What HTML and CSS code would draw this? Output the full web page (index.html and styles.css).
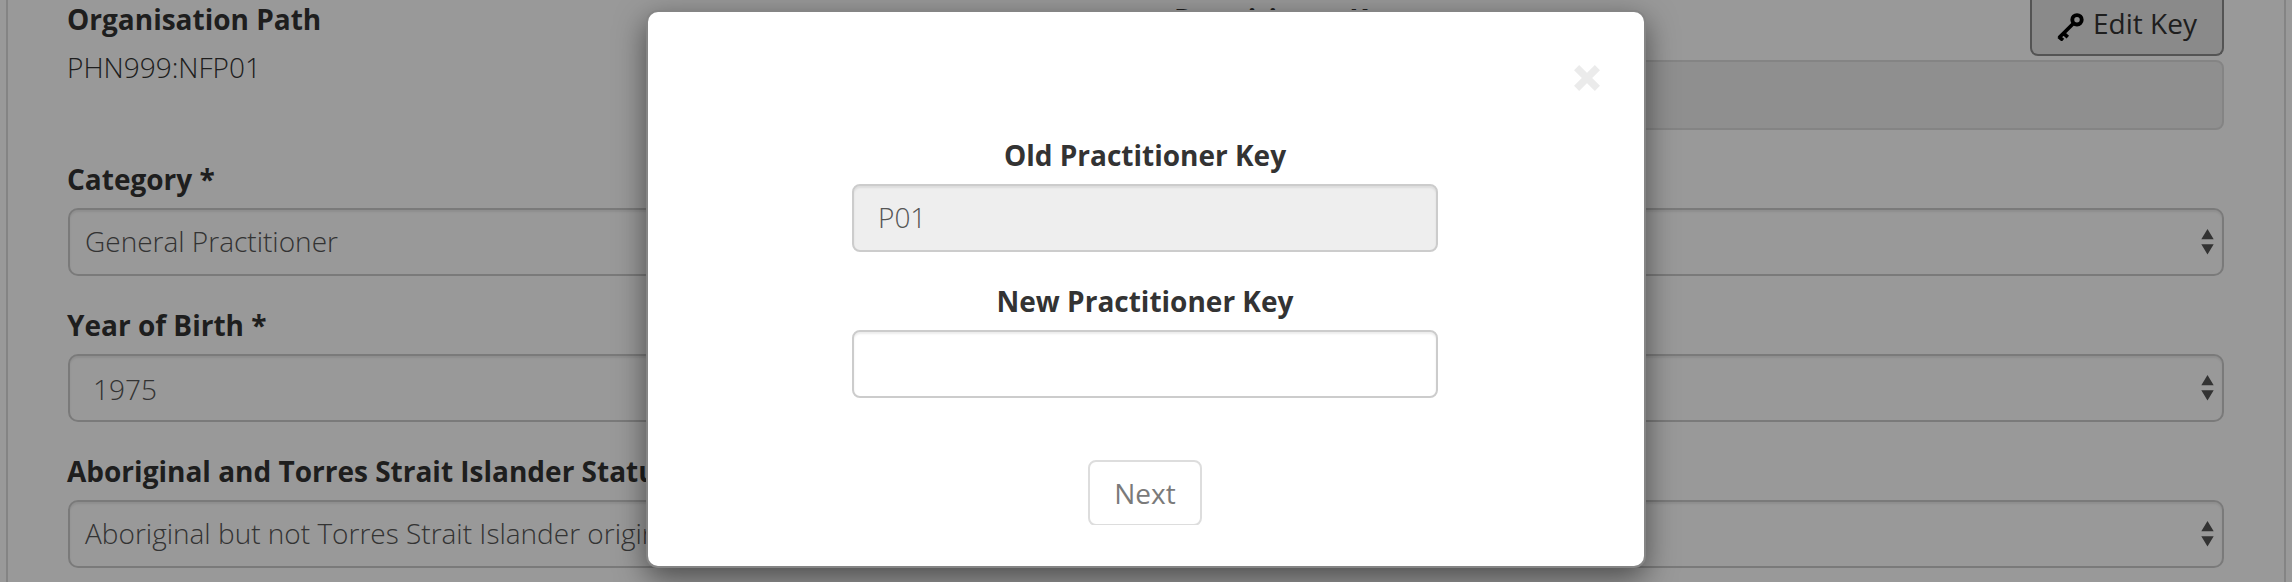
FILE: index.html
```html
<!DOCTYPE html>
<html lang="en">
<head>
<meta charset="utf-8">
<title>Edit Practitioner Key</title>
<link rel="stylesheet" href="styles.css">
</head>
<body>
<main class="panel">
  <div class="row row-first">
    <div class="field">
      <div class="label">Organisation Path</div>
      <div class="static">PHN999:NFP01</div>
    </div>
    <div class="field">
      <div class="label-bar">
        <div class="label label-right">Practitioner Key</div>
        <button class="edit-key" type="button">
          <svg class="key-icon" viewBox="0 0 27 28" width="27" height="28">
            <circle cx="20" cy="6.8" r="4.7" fill="none" stroke="#000" stroke-width="3.9"/>
            <path d="M16.6 10.2L2 24.8M1.6 23.6L6 27.2M6.6 20.4L10.8 24.2" fill="none" stroke="#000" stroke-width="3.7"/>
          </svg>
          <span>Edit Key</span>
        </button>
      </div>
      <div class="control disabled"></div>
    </div>
  </div>
  <div class="row">
    <div class="field">
      <div class="label">Category *</div>
      <div class="control select">General Practitioner</div>
    </div>
    <div class="field">
      <div class="label"></div>
      <div class="control select"><svg class="arrows" viewBox="0 0 13 26" width="13" height="26"><path d="M6.5 0L12.7 10.2H.3zM6.5 25.4L.3 15.2H12.7z"/></svg></div>
    </div>
  </div>
  <div class="row">
    <div class="field">
      <div class="label">Year of Birth *</div>
      <div class="control select year">1975</div>
    </div>
    <div class="field">
      <div class="label"></div>
      <div class="control select"><svg class="arrows" viewBox="0 0 13 26" width="13" height="26"><path d="M6.5 0L12.7 10.2H.3zM6.5 25.4L.3 15.2H12.7z"/></svg></div>
    </div>
  </div>
  <div class="row">
    <div class="field">
      <div class="label">Aboriginal and Torres Strait Islander Status *</div>
      <div class="control select">Aboriginal but not Torres Strait Islander origin</div>
    </div>
    <div class="field">
      <div class="label"></div>
      <div class="control select"><svg class="arrows" viewBox="0 0 13 26" width="13" height="26"><path d="M6.5 0L12.7 10.2H.3zM6.5 25.4L.3 15.2H12.7z"/></svg></div>
    </div>
  </div>
</main>
<div class="backdrop">
  <div class="modal">
    <div class="modal-head">
      <svg class="close" viewBox="0 0 26 26" width="26" height="26"><path d="M2.6 2.6L23.4 23.4M23.4 2.6L2.6 23.4"/></svg>
    </div>
    <div class="modal-body">
      <div class="modal-label">Old Practitioner Key</div>
      <div class="control modal-input locked">P01</div>
      <div class="modal-label">New Practitioner Key</div>
      <div class="control modal-input"></div>
      <div class="actions"><button class="next" type="button">Next</button></div>
    </div>
  </div>
</div>
</body>
</html>
```
FILE: styles.css
```css
* { box-sizing: border-box; }
html, body { margin: 0; height: 582px; overflow: hidden; }
body {
  background: #fff;
  color: #333;
  font: 300 28px/40px "Open Sans", sans-serif;
}
.panel {
  width: 2280px;
  height: 582px;
  margin-left: 6px;
  padding: 0 60px;
  border: solid #ddd;
  border-width: 0 2px;
}
.row {
  display: grid;
  grid-template-columns: 1fr 1fr;
  column-gap: 56px;
  height: 146px;
}
.row-first { height: 160px; }
.label {
  height: 48px;
  margin-left: -1px;
  line-height: 38px;
  font-weight: 700;
  white-space: nowrap;
}
.label-right { margin-left: 0; }
.static { margin-left: -1px; line-height: 38px; }
.label-bar {
  display: flex;
  justify-content: space-between;
  align-items: flex-start;
  height: 60px;
}
.edit-key {
  display: flex;
  gap: 9px;
  width: 194px;
  height: 56px;
  padding: 3px 0 0 25px;
  border: 2px solid #8c8c8c;
  border-top: 0;
  border-radius: 0 0 8px 8px;
  background: #e6e6e6;
  color: #333;
  font: 400 28px/40px "Open Sans", sans-serif;
}
.key-icon { margin-top: 10px; flex: none; }
.control {
  height: 68px;
  padding: 12px 16px 12px 15px;
  border: 2px solid #ccc;
  border-radius: 8px;
  box-shadow: inset 0 2px 2px rgba(0, 0, 0, .075);
  color: #555;
  line-height: 38px;
  white-space: nowrap;
}
.disabled { height: 70px; background: #eee; border-color: #ddd; box-shadow: none; }
.select { border-radius: 10px; display: flex; justify-content: space-between; }
.year { padding-left: 23px; line-height: 42px; }
.arrows { margin: 7px -8px 0 auto; fill: #555; }
.backdrop {
  position: absolute;
  inset: 0;
  padding: 10px 0 0 646px;
  background: rgba(0, 0, 0, .4);
}
.modal {
  width: 1000px;
  height: 558px;
  border: 2px solid #858585;
  border-radius: 12px;
  background: #fff;
  box-shadow: 0 10px 30px rgba(0, 0, 0, .5);
}
.modal-head {
  display: flex;
  justify-content: flex-end;
  height: 124px;
  padding: 53px 44px 0 0;
}
.close path { stroke: #ebebeb; stroke-width: 7.2; }
.modal-body { width: 586px; margin: 0 auto 0 204px; }
.modal-label {
  height: 48px;
  line-height: 38px;
  font-weight: 700;
  text-align: center;
}
.modal-input { height: 68px; margin-bottom: 30px; padding-left: 24px; }
.locked { background: #eee; }
.actions {
  display: flex;
  justify-content: center;
  height: 65px;
  margin-top: 62px;
  overflow: hidden;
}
.next {
  width: 114px;
  height: 66px;
  border: 2px solid #ddd;
  border-radius: 8px;
  background: #fff;
  color: #7a7a7a;
  font: 400 28px/40px "Open Sans", sans-serif;
}
```
